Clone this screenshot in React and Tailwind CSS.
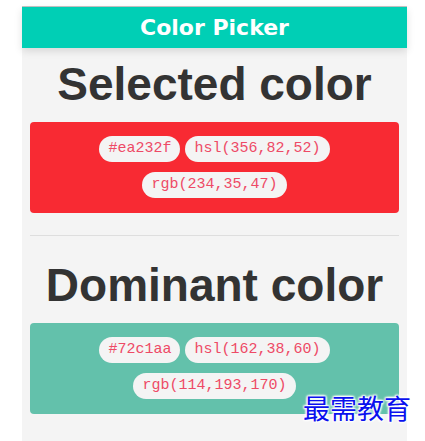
import React from 'react';

const swatches = [
  {
    title: 'Selected color',
    bg: 'bg-[#f82a33]',
    codes: ['#ea232f', 'hsl(356,82,52)', 'rgb(234,35,47)'],
  },
  {
    title: 'Dominant color',
    bg: 'bg-[#63c1ab]',
    codes: ['#72c1aa', 'hsl(162,38,60)', 'rgb(114,193,170)'],
  },
];

function Chip({ children }) {
  return (
    <span className="h-[26px] px-[9px] flex items-center rounded-full bg-[#f4f4f4] text-[#ee4a66] text-[15px] font-['Liberation_Mono',monospace]">
      {children}
    </span>
  );
}

function Swatch({ swatch }) {
  const [hex, hsl, rgb] = swatch.codes;
  return (
    <section>
      <h1 className="text-center text-[46px] leading-none font-bold text-[#333]">{swatch.title}</h1>
      <div className={`mt-[15px] mx-[8px] rounded-[4px] ${swatch.bg} pt-[14px] pb-[15px] flex flex-col items-center gap-[10px]`}>
        <div className="flex gap-[5px]">
          <Chip>{hex}</Chip>
          <Chip>{hsl}</Chip>
        </div>
        <Chip>{rgb}</Chip>
      </div>
    </section>
  );
}

export default function App() {
  return (
    <div className="relative h-[441px] bg-white font-['Liberation_Sans',Arial,sans-serif] overflow-hidden">
      <div className="ml-[22px] mt-[6px] w-[385px] h-[435px] bg-[#f4f4f4] border-t border-[#c4c4c4]">
        <header className="relative z-10 h-[41px] bg-[#00cfb5] flex items-center justify-center shadow-[0_3px_8px_rgba(0,0,0,0.12)]">
          <span className="text-white text-[22px] font-bold font-['Comic_Sans_MS','DejaVu_Sans',sans-serif]">Color Picker</span>
        </header>
        <div className="pt-[13px]">
          <Swatch swatch={swatches[0]} />
          <div className="mx-[8px] mt-[22px] mb-[26px] h-px bg-[#dedede]" />
          <Swatch swatch={swatches[1]} />
        </div>
      </div>
      <div className="absolute left-[303px] top-[394px] text-[27px] leading-none text-[#0a10ee] font-['Noto_Sans_CJK_SC',serif] [text-shadow:0_0_2px_#fff,1px_1px_2px_#fff,-1px_-1px_2px_#fff,1px_-1px_2px_#fff,-1px_1px_2px_#fff]">
        最需教育
      </div>
    </div>
  );
}
